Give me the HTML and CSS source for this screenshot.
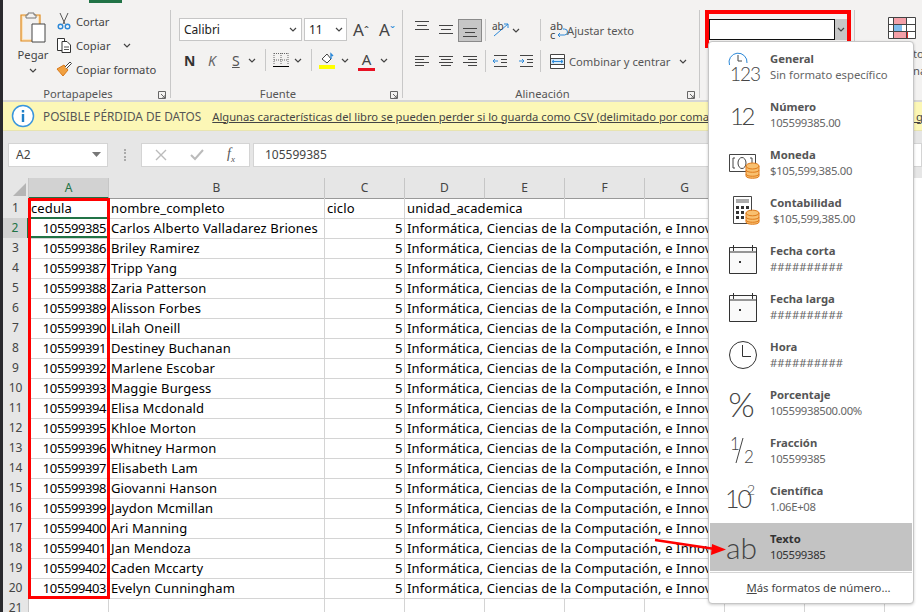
FILE: index.html
```html
<!DOCTYPE html>
<html lang="es">
<head>
    <meta charset="UTF-8">
    <title>Formato de celdas</title>
    <link rel="stylesheet" href="styles.css">
</head>
<body>
<div class="app">
    <div class="ribbon">
        <div class="tab-mark"></div>

        <section class="group clip">
            <div class="group-body clip-body">
                <div class="paste">
                    <svg width="32" height="32" viewBox="-2 -1 32 32"><path d="M2 4h19v26H2z" fill="#fbe3bd" stroke="#e08a1e" stroke-width="1.2"/><path d="M4 6h15v22H4z" fill="#f3f2f1"/><path d="M9 4V2h6v2h2v3H7V4z" fill="#f3f2f1" stroke="#777"/><path d="M13 13h13v18H13z" fill="#fff" stroke="#444"/></svg>
                    <span>Pegar</span>
                    <svg class="chev" width="8" height="5" viewBox="0 0 8 5"><path d="M1 1l3 3 3-3"/></svg>
                </div>
                <div class="clip-actions">
                    <div class="clip-row">
                        <svg width="16" height="18" viewBox="0 0 16 18"><path d="M4 1l5 11M12 1L7 12" stroke="#555" fill="none"/><circle cx="4.500" cy="14.500" r="2.300" fill="none" stroke="#2b88d8" stroke-width="1.400"/><circle cx="11.500" cy="14.500" r="2.300" fill="none" stroke="#2b88d8" stroke-width="1.400"/></svg>
                        <span>Cortar</span>
                    </div>
                    <div class="clip-row">
                        <svg width="16" height="16" viewBox="0 0 16 16"><path d="M1.500 1.500h7v12h-7z" fill="#fff" stroke="#333"/><path d="M6 4.500h5l3.500 3.500v7.500H6z" fill="#fff" stroke="#333"/><path d="M8 10h5M8 12.500h5" stroke="#555"/></svg>
                        <span>Copiar</span>
                        <svg class="chev copy-chev" width="8" height="5" viewBox="0 0 8 5"><path d="M1 1l3 3 3-3"/></svg>
                    </div>
                    <div class="clip-row">
                        <svg width="16" height="16" viewBox="0 0 16 16"><path d="M1 8l7-4 4 5-5 6C5 13 3 10 1 8z" fill="#f0a040" stroke="#d9791a"/><path d="M9 6l5-5 1.500 1.500-5 5" fill="#fff" stroke="#444"/></svg>
                        <span>Copiar formato</span>
                    </div>
                </div>
            </div>
            <div class="group-label">Portapapeles<svg class="launcher" width="8" height="8" viewBox="0 0 8 8"><path d="M.5 7.500v-7h7v7zM3 3l4 4M7 4v3H4" fill="none" stroke="#666"/></svg></div>
        </section>

        <section class="group font">
            <div class="group-body">
                <div class="tool-row">
                    <div class="combo font-name"><span>Calibri</span><svg class="chev" width="8" height="5" viewBox="0 0 8 5"><path d="M1 1l3 3 3-3"/></svg></div>
                    <div class="combo font-size"><span>11</span><svg class="chev" width="8" height="5" viewBox="0 0 8 5"><path d="M1 1l3 3 3-3"/></svg></div>
                    <span class="grow-a">A<small>ˆ</small></span>
                    <span class="grow-a">A<small class="blue">ˇ</small></span>
                </div>
                <div class="tool-row font-tools">
                    <b class="tool-n">N</b>
                    <i class="tool-k">K</i>
                    <u class="tool-s">S</u>
                    <svg class="chev" width="8" height="5" viewBox="0 0 8 5"><path d="M1 1l3 3 3-3"/></svg>
                    <span class="vsep"></span>
                    <svg width="16" height="16" viewBox="0 0 16 16"><path d="M1 1.500h14M1 8h14M8 1v12M1 1v12M15 1v12" stroke="#666" stroke-dasharray="1 1" fill="none"/><path d="M0 14.500h16" stroke="#000"/></svg>
                    <svg class="chev" width="8" height="5" viewBox="0 0 8 5"><path d="M1 1l3 3 3-3"/></svg>
                    <span class="vsep"></span>
                    <svg width="17" height="18" viewBox="0 0 17 18"><path d="M3 8l5-5 4 5-4 4z" fill="#fff" stroke="#444"/><path d="M12 8V3l2 2" stroke="#2b88d8" fill="none" stroke-width="1.400"/><path d="M0 14h16v4H0z" fill="#ffff00"/></svg>
                    <svg class="chev" width="8" height="5" viewBox="0 0 8 5"><path d="M1 1l3 3 3-3"/></svg>
                    <span class="color-a">A</span>
                    <svg class="chev" width="8" height="5" viewBox="0 0 8 5"><path d="M1 1l3 3 3-3"/></svg>
                </div>
            </div>
            <div class="group-label">Fuente<svg class="launcher" width="8" height="8" viewBox="0 0 8 8"><path d="M.5 7.500v-7h7v7zM3 3l4 4M7 4v3H4" fill="none" stroke="#666"/></svg></div>
        </section>

        <section class="group align">
            <div class="group-body">
                <div class="tool-row align-tools">
                    <span class="align-btn"><svg width="16" height="18" viewBox="0 0 16 18"><path d="M1 .5h14M3 4.500h10M1 8.500h14" stroke="#444" fill="none"/></svg></span>
                    <span class="align-btn"><svg width="16" height="18" viewBox="0 0 16 18"><path d="M1 4.500h14M3 8.500h10M1 12.500h14" stroke="#444" fill="none"/></svg></span>
                    <span class="align-btn on"><svg width="16" height="18" viewBox="0 0 16 18"><path d="M1 7.500h14M3 11.500h10M1 15.500h14" stroke="#444" fill="none"/></svg></span>
                    <span class="vsep"></span>
                    <svg class="orient" width="18" height="18" viewBox="0 0 18 18"><path d="M2 15L16 3M16 3h-4M16 3v4" stroke="#2b88d8" fill="none"/><text x="0" y="9" class="orient-text">ab</text></svg>
                    <svg class="chev" width="8" height="5" viewBox="0 0 8 5"><path d="M1 1l3 3 3-3"/></svg>
                    <span class="vsep wide"></span>
                    <span class="wrap-ico">ab<br>c</span>
                    <svg class="wrap-arrow" width="10" height="10" viewBox="0 0 10 10"><path d="M7 1h1.500a2 2 0 0 1 0 6H2M4 5L2 7l2 2" stroke="#2b88d8" fill="none"/></svg>
                    <span class="tool-text">Ajustar texto</span>
                </div>
                <div class="tool-row align-tools lower">
                    <span class="align-btn"><svg width="16" height="12" viewBox="0 0 16 12"><path d="M1 1.500h14M1 4.500h9M1 7.500h14M1 10.500h9" stroke="#444" fill="none"/></svg></span>
                    <span class="align-btn"><svg width="16" height="12" viewBox="0 0 16 12"><path d="M1 1.500h14M3 4.500h10M1 7.500h14M3 10.500h10" stroke="#444" fill="none"/></svg></span>
                    <span class="align-btn"><svg width="16" height="12" viewBox="0 0 16 12"><path d="M1 1.500h14M6 4.500h9M1 7.500h14M6 10.500h9" stroke="#444" fill="none"/></svg></span>
                    <span class="vsep"></span>
                    <svg class="indent" width="16" height="12" viewBox="0 0 16 12"><path d="M1 6h5M3 4L1 6l2 2" stroke="#2b88d8" fill="none"/><path d="M2 .5h13M9 4.500h6M9 7.500h6M2 11.500h13" stroke="#444" fill="none"/></svg>
                    <svg class="indent" width="16" height="12" viewBox="0 0 16 12"><path d="M1 6h5M4 4l2 2-2 2" stroke="#2b88d8" fill="none"/><path d="M2 .5h13M9 4.500h6M9 7.500h6M2 11.500h13" stroke="#444" fill="none"/></svg>
                    <span class="vsep wide"></span>
                    <svg width="15" height="15" viewBox="0 0 15 15"><path d="M.5.5h14v14H.5zM.5 4.500h14M.5 10.500h14" fill="#fff" stroke="#444"/><path d="M1 5h13v5H1z" fill="#d6eaf8"/><path d="M2 7.500h11M4 6L2 7.500 4 9M11 6l2 1.500L11 9" stroke="#2b88d8" fill="none"/></svg>
                    <span class="tool-text">Combinar y centrar</span>
                    <svg class="chev" width="8" height="5" viewBox="0 0 8 5"><path d="M1 1l3 3 3-3"/></svg>
                </div>
            </div>
            <div class="group-label">Alineación<svg class="launcher" width="8" height="8" viewBox="0 0 8 8"><path d="M.5 7.500v-7h7v7zM3 3l4 4M7 4v3H4" fill="none" stroke="#666"/></svg></div>
        </section>

        <section class="group number">
            <div class="number-box">
                <div class="number-input"></div>
                <div class="number-btn"><svg class="chev" width="8" height="5" viewBox="0 0 8 5"><path d="M1 1l3 3 3-3"/></svg></div>
            </div>
        </section>

        <section class="group styles-group">
            <svg width="28" height="22" viewBox="0 0 28 22"><path d="M0 0h28v22H0z" fill="#fff"/><path d="M5.500.5h13v7h-13zM5.500 14.500h14v7h-14z" fill="#f4a0a8" stroke="#e02020"/><path d="M5 7h9v7H5z" fill="#7fbcec"/><path d="M.5.5h27v21H.5zM.5 7.500h27M.5 14.500h27M5.500.5v21M18.500.5v21" fill="none" stroke="#444"/></svg>
            <span class="cut-text">to</span>
            <span class="cut-text">na</span>
        </section>
    </div>

    <div class="notice">
        <svg width="24" height="24" viewBox="0 0 24 24"><circle cx="12" cy="12" r="10.500" fill="#fff" stroke="#3a96dd" stroke-width="1.500"/><path d="M10.800 10h2.400v8h-2.400zM10.800 6h2.400v2.400h-2.400z" fill="#1f80c8"/></svg>
        <span class="notice-title">POSIBLE PÉRDIDA DE DATOS</span>
        <span class="notice-link">Algunas características del libro se pueden perder si lo guarda como CSV (delimitado por comas). Para conservar estas características, guárdelo en un formato de Excel.</span>
    </div>

    <div class="formula-bar">
        <div class="name-box"><span>A2</span><svg width="9" height="5" viewBox="0 0 9 5"><path d="M0 0h9L4.500 5z" fill="#777"/></svg></div>
        <span class="grip"></span>
        <div class="fx-box">
            <svg width="12" height="12" viewBox="0 0 12 12"><path d="M1 1l10 10M11 1L1 11" stroke="#bbb" stroke-width="1.400"/></svg>
            <svg width="14" height="12" viewBox="0 0 14 12"><path d="M1 6l4 4 8-9" stroke="#bbb" stroke-width="2" fill="none"/></svg>
            <span class="fx">f<sub>x</sub></span>
        </div>
        <div class="formula-input">105599385</div>
    </div>

    <div class="sheet">
        <div class="row head">
            <div class="corner"><svg width="13" height="13" viewBox="0 0 13 13"><path d="M13 0v13H0z" fill="#b5b5b5"/></svg></div>
            <div class="col on">A</div><div class="col">B</div><div class="col">C</div><div class="col">D</div><div class="col">E</div><div class="col">F</div><div class="col">G</div><div class="col">H</div><div class="col">I</div>
        </div>
        <div class="row">
            <div class="num">1</div><div class="cell">cedula</div><div class="cell">nombre_completo</div><div class="cell">ciclo</div><div class="cell span2">unidad_academica</div><div class="cell"></div><div class="cell"></div><div class="cell"></div><div class="cell"></div>
        </div>
        <div class="row"><div class="num on">2</div><div class="cell right">105599385</div><div class="cell">Carlos Alberto Valladarez Briones</div><div class="cell right">5</div><div class="cell long">Informática, Ciencias de la Computación, e Innovación</div></div>
        <div class="row"><div class="num">3</div><div class="cell right">105599386</div><div class="cell">Briley Ramirez</div><div class="cell right">5</div><div class="cell long">Informática, Ciencias de la Computación, e Innovación</div></div>
        <div class="row"><div class="num">4</div><div class="cell right">105599387</div><div class="cell">Tripp Yang</div><div class="cell right">5</div><div class="cell long">Informática, Ciencias de la Computación, e Innovación</div></div>
        <div class="row"><div class="num">5</div><div class="cell right">105599388</div><div class="cell">Zaria Patterson</div><div class="cell right">5</div><div class="cell long">Informática, Ciencias de la Computación, e Innovación</div></div>
        <div class="row"><div class="num">6</div><div class="cell right">105599389</div><div class="cell">Alisson Forbes</div><div class="cell right">5</div><div class="cell long">Informática, Ciencias de la Computación, e Innovación</div></div>
        <div class="row"><div class="num">7</div><div class="cell right">105599390</div><div class="cell">Lilah Oneill</div><div class="cell right">5</div><div class="cell long">Informática, Ciencias de la Computación, e Innovación</div></div>
        <div class="row"><div class="num">8</div><div class="cell right">105599391</div><div class="cell">Destiney Buchanan</div><div class="cell right">5</div><div class="cell long">Informática, Ciencias de la Computación, e Innovación</div></div>
        <div class="row"><div class="num">9</div><div class="cell right">105599392</div><div class="cell">Marlene Escobar</div><div class="cell right">5</div><div class="cell long">Informática, Ciencias de la Computación, e Innovación</div></div>
        <div class="row"><div class="num">10</div><div class="cell right">105599393</div><div class="cell">Maggie Burgess</div><div class="cell right">5</div><div class="cell long">Informática, Ciencias de la Computación, e Innovación</div></div>
        <div class="row"><div class="num">11</div><div class="cell right">105599394</div><div class="cell">Elisa Mcdonald</div><div class="cell right">5</div><div class="cell long">Informática, Ciencias de la Computación, e Innovación</div></div>
        <div class="row"><div class="num">12</div><div class="cell right">105599395</div><div class="cell">Khloe Morton</div><div class="cell right">5</div><div class="cell long">Informática, Ciencias de la Computación, e Innovación</div></div>
        <div class="row"><div class="num">13</div><div class="cell right">105599396</div><div class="cell">Whitney Harmon</div><div class="cell right">5</div><div class="cell long">Informática, Ciencias de la Computación, e Innovación</div></div>
        <div class="row"><div class="num">14</div><div class="cell right">105599397</div><div class="cell">Elisabeth Lam</div><div class="cell right">5</div><div class="cell long">Informática, Ciencias de la Computación, e Innovación</div></div>
        <div class="row"><div class="num">15</div><div class="cell right">105599398</div><div class="cell">Giovanni Hanson</div><div class="cell right">5</div><div class="cell long">Informática, Ciencias de la Computación, e Innovación</div></div>
        <div class="row"><div class="num">16</div><div class="cell right">105599399</div><div class="cell">Jaydon Mcmillan</div><div class="cell right">5</div><div class="cell long">Informática, Ciencias de la Computación, e Innovación</div></div>
        <div class="row"><div class="num">17</div><div class="cell right">105599400</div><div class="cell">Ari Manning</div><div class="cell right">5</div><div class="cell long">Informática, Ciencias de la Computación, e Innovación</div></div>
        <div class="row"><div class="num">18</div><div class="cell right">105599401</div><div class="cell">Jan Mendoza</div><div class="cell right">5</div><div class="cell long">Informática, Ciencias de la Computación, e Innovación</div></div>
        <div class="row"><div class="num">19</div><div class="cell right">105599402</div><div class="cell">Caden Mccarty</div><div class="cell right">5</div><div class="cell long">Informática, Ciencias de la Computación, e Innovación</div></div>
        <div class="row"><div class="num">20</div><div class="cell right">105599403</div><div class="cell">Evelyn Cunningham</div><div class="cell right">5</div><div class="cell long">Informática, Ciencias de la Computación, e Innovación</div></div>
        <div class="row">
            <div class="num">21</div><div class="cell"></div><div class="cell"></div><div class="cell"></div><div class="cell"></div><div class="cell"></div><div class="cell"></div><div class="cell"></div><div class="cell"></div><div class="cell"></div>
        </div>

        <div class="active-cell"></div>
        <div class="col-highlight"></div>
    </div>

    <div class="number-highlight"></div>

    <div class="format-menu">
        <div class="item">
            <div class="ico"><svg width="30" height="34" viewBox="0 0 30 34"><path d="M2.500 15A9 9 0 1 1 20 13" fill="none" stroke="#2b88d8"/><path d="M11 5v6h4" fill="none" stroke="#444"/><text x="3" y="31" class="ico-text t19">123</text></svg></div>
            <div class="txt"><b>General</b><span>Sin formato específico</span></div>
        </div>
        <div class="item">
            <div class="ico big twelve">12</div>
            <div class="txt"><b>Número</b><span class="digits">105599385.00</span></div>
        </div>
        <div class="item">
            <div class="ico"><svg width="32" height="32" viewBox="0 0 32 32"><path d="M3.500 7.500h26v17h-26z" fill="#fff" stroke="#444"/><path d="M9 11H7v10h2M24 11h2v10h-2" fill="none" stroke="#444"/><ellipse cx="16" cy="16" rx="4" ry="5.500" fill="none" stroke="#444"/><path d="M20 19v10c0 3 13 3 13 0V19z" fill="#f8c070" stroke="#e07b1a"/><ellipse cx="26.500" cy="19" rx="6.500" ry="3" fill="#f8c070" stroke="#e07b1a"/><path d="M20 23c0 3 13 3 13 0M20 27c0 3 13 3 13 0" fill="none" stroke="#e07b1a"/></svg></div>
            <div class="txt"><b>Moneda</b><span class="digits">$105,599,385.00</span></div>
        </div>
        <div class="item">
            <div class="ico"><svg width="32" height="30" viewBox="-3 0 32 30"><path d="M4.500.5h18v27h-18z" fill="#fff" stroke="#444"/><path d="M7 3h13v4H7z" fill="#aaa"/><path d="M7 10h3v3H7zM12 10h3v3h-3zM17 10h3v3h-3zM7 15h3v3H7zM12 15h3v3h-3zM7 20h3v3H7zM12 20h3v3h-3z" fill="#333"/><path d="M17 17v9c0 3 13 3 13 0v-9z" fill="#f8c070" stroke="#e07b1a"/><ellipse cx="23.500" cy="17" rx="6.500" ry="2.800" fill="#f8c070" stroke="#e07b1a"/><path d="M17 21c0 3 13 3 13 0M17 24c0 3 13 3 13 0" fill="none" stroke="#e07b1a"/></svg></div>
            <div class="txt"><b>Contabilidad</b><span class="digits indented">$105,599,385.00</span></div>
        </div>
        <div class="item">
            <div class="ico"><svg width="30" height="30" viewBox="0 0 30 30"><path d="M2.500 3.500h27v26h-27zM2.500 8h27M6.500 1v6M25.500 1v6" fill="#fafafa" stroke="#333"/><path d="M12 17h2v2h-2z" fill="#333"/></svg></div>
            <div class="txt"><b>Fecha corta</b><span>##########</span></div>
        </div>
        <div class="item">
            <div class="ico"><svg width="30" height="30" viewBox="0 0 30 30"><path d="M2.500 3.500h27v26h-27zM2.500 8h27M6.500 1v6M25.500 1v6" fill="#fafafa" stroke="#333"/><path d="M12 17h2v2h-2z" fill="#333"/></svg></div>
            <div class="txt"><b>Fecha larga</b><span>##########</span></div>
        </div>
        <div class="item">
            <div class="ico"><svg width="30" height="30" viewBox="0 0 30 30"><circle cx="16" cy="15" r="13.500" fill="#fff" stroke="#333"/><path d="M15.500 5v11.500H24" fill="none" stroke="#333"/></svg></div>
            <div class="txt"><b>Hora</b><span>##########</span></div>
        </div>
        <div class="item">
            <div class="ico big pct">%</div>
            <div class="txt"><b>Porcentaje</b><span class="digits">10559938500.00%</span></div>
        </div>
        <div class="item">
            <div class="ico"><svg width="30" height="32" viewBox="0 0 30 32"><text x="3" y="15" class="ico-text t17">1</text><path d="M16 3L9 28" stroke="#444"/><text x="17" y="28" class="ico-text t17">2</text></svg></div>
            <div class="txt"><b>Fracción</b><span class="digits">105599385</span></div>
        </div>
        <div class="item">
            <div class="ico"><svg width="32" height="32" viewBox="0 0 32 32"><text x="-1" y="25" class="ico-text t25">10</text><text x="21" y="12" class="ico-text t14">2</text></svg></div>
            <div class="txt"><b>Científica</b><span class="digits">1.06E+08</span></div>
        </div>
        <div class="item sel">
            <div class="ico big ab">ab</div>
            <div class="txt"><b>Texto</b><span class="digits">105599385</span></div>
        </div>
        <div class="more"><u>M</u>ás formatos de número...</div>
    </div>

    <svg class="arrow" width="80" height="24" viewBox="0 0 80 24"><path d="M1 2l60 9" stroke="#f00" stroke-width="2.500" fill="none"/><path d="M72 11.500L58 6l-1 11z" fill="#f00"/></svg>
</div>
</body>
</html>
```

FILE: styles.css
```css
* {
    box-sizing: border-box;
}
html, body {
    margin: 0;
    height: 100%;
    overflow: hidden;
}
body {
    font-family: "Noto Sans", sans-serif;
    font-size: 12px;
    color: #444;
    background: #e6e6e6;
}
svg {
    flex: none;
    overflow: visible;
}
.app {
    position: relative;
    width: 922px;
    height: 612px;
    overflow: hidden;
    border-left: 3px solid #2a2a2e;
}

/* ribbon */
.ribbon {
    position: relative;
    display: flex;
    height: 102px;
    font-size: 11.2px;
    background: #f3f2f1;
    border-bottom: 2px solid #d6d6d6;
}
.tab-mark {
    position: absolute;
    left: 86px;
    top: 0;
    width: 33px;
    height: 3px;
    background: #217346;
}
.group {
    position: relative;
    flex: none;
    height: 88px;
    margin-top: 10px;
    border-right: 1px solid #c8c8c8;
}
.group-body {
    height: 72px;
}
.group-label {
    position: absolute;
    left: 0;
    right: 0;
    top: 75px;
    padding-right: 17px;
    text-align: center;
    line-height: 18px;
    color: #555;
}
.launcher {
    position: absolute;
    right: 4px;
    top: 6px;
}
.chev {
    fill: none;
    stroke: #444;
    stroke-width: 1.2;
}
.vsep {
    flex: none;
    width: 1px;
    height: 22px;
    background: #c8c8c8;
}
.vsep.wide {
    margin: 0 9px 0 20px;
}
.tool-row {
    display: flex;
    align-items: center;
}
.tool-text {
    white-space: nowrap;
    color: #555;
}

/* portapapeles */
.clip {
    width: 168px;
}
.clip-body {
    display: flex;
    padding-left: 14px;
}
.paste {
    display: flex;
    flex-direction: column;
    align-items: center;
    width: 32px;
}
.paste span {
    margin-top: 4px;
    line-height: 18px;
}
.paste .chev {
    margin-top: 4px;
}
.clip-actions {
    margin: -1px 0 0 7px;
}
.clip-row {
    display: flex;
    align-items: center;
    gap: 4px;
    height: 24px;
}
.copy-chev {
    margin-left: 8px;
}

/* fuente */
.font {
    width: 232px;
    padding-left: 8px;
}
.combo {
    display: flex;
    align-items: center;
    justify-content: space-between;
    height: 23px;
    padding: 0 4px;
    font-size: 12px;
    background: #fff;
    border: 1px solid #c6c6c6;
    color: #222;
}
.font-tools {
    margin-top: 7px;
    height: 24px;
}
.font .tool-row:first-child {
    margin-top: 8px;
}
.font-name {
    width: 123px;
}
.font-size {
    width: 43px;
    margin-left: 2px;
    padding-right: 3px;
}
.grow-a {
    margin-left: 6px;
    width: 20px;
    font-size: 17px;
    color: #444;
}
.grow-a small {
    font-size: 12px;
}
.grow-a .blue {
    color: #2b88d8;
}
.tool-n {
    margin-left: 5px;
    width: 24px;
    font-size: 14px;
    color: #333;
}
.tool-k {
    width: 24px;
    font-size: 14px;
    color: #666;
}
.tool-s {
    width: 16px;
    font-size: 14px;
    color: #555;
}
.font-tools .vsep {
    margin: 0 7px 0 9px;
}
.font-tools > svg:not(.chev) {
    margin-right: 5px;
}
.color-a {
    margin: 0 5px 0 9px;
    width: 17px;
    height: 21px;
    font-size: 15px;
    line-height: 18px;
    text-align: center;
    color: #444;
    border-bottom: 3px solid #e81123;
}

/* alineacion */
.align {
    width: 297px;
    padding-left: 7px;
}
.align-tools {
    height: 24px;
    margin-top: 8px;
}
.align-tools.lower {
    margin-top: 7px;
}
.align-btn {
    display: flex;
    align-items: center;
    justify-content: center;
    width: 24px;
    height: 23px;
    flex: none;
}
.align-btn.on {
    background: #c6c6c6;
    border: 1px solid #8a8a8a;
}
.align-tools > .vsep:not(.wide) {
    margin: 0 6px 0 3px;
}
.orient {
    margin-right: 2px;
}
.orient-text {
    font-family: "Noto Sans", sans-serif;
    font-size: 10px;
    fill: #444;
}
.indent {
    margin-right: 10px;
}
.align-tools .indent + .vsep {
    margin-left: -4px;
}
.wrap-ico {
    width: 12px;
    font-size: 11px;
    line-height: 9px;
    color: #444;
}
.wrap-arrow {
    margin: 6px 1px 0 -6px;
}
.lower .tool-text {
    margin: 0 9px 0 4px;
}

/* numero */
.number {
    width: 155px;
    padding: 9px 0 0 9px;
}
.number-box {
    display: flex;
    width: 138px;
    height: 21px;
}
.number-input {
    flex: 1;
    background: #fff;
    border: 1px solid #111;
}
.number-btn {
    display: flex;
    align-items: center;
    justify-content: center;
    width: 12px;
    background: #c6c6c6;
}
.number-highlight {
    position: absolute;
    left: 702px;
    top: 10px;
    width: 146px;
    height: 38px;
    border: 4px solid #f00;
}
.styles-group {
    flex: 1;
    padding: 7px 0 0 33px;
    border: 0;
}
.cut-text {
    position: absolute;
    left: 58px;
    top: 36px;
    color: #555;
}
.cut-text + .cut-text {
    top: 53px;
}

/* barra amarilla */
.notice {
    display: flex;
    align-items: center;
    height: 29px;
    padding-left: 8px;
    font-size: 11.2px;
    background: #fcf7b6;
    border-bottom: 1px solid #e8e4b0;
    white-space: nowrap;
    overflow: hidden;
}
.notice-title {
    margin: 0 11px 0 8px;
    font-size: 11.8px;
    color: #555;
}
.notice-link {
    color: #444;
    text-decoration: underline;
}

/* formula */
.formula-bar {
    display: flex;
    align-items: center;
    height: 47px;
    padding: 0 0 0 5px;
}
.name-box {
    display: flex;
    align-items: center;
    justify-content: space-between;
    width: 100px;
    height: 24px;
    padding: 0 6px 0 7px;
    background: #fff;
    border: 1px solid #d4d4d4;
    color: #444;
}
.grip {
    width: 2px;
    height: 12px;
    margin: 0 15px 0 16px;
    border-left: 2px dotted #aaa;
}
.fx-box {
    display: flex;
    align-items: center;
    gap: 23px;
    width: 109px;
    height: 24px;
    padding-left: 13px;
    background: #fff;
    border: 1px solid #d4d4d4;
}
.fx {
    font-family: "Liberation Serif", serif;
    font-style: italic;
    font-size: 14px;
    color: #555;
}
.fx sub {
    font-size: 9px;
}
.formula-input {
    flex: 1;
    height: 24px;
    margin-left: 3px;
    padding-left: 11px;
    line-height: 22px;
    background: #fff;
    border: 1px solid #d4d4d4;
    color: #444;
}

/* hoja */
.sheet {
    position: relative;
    background: #fff;
    font-size: 13px;
    color: #000;
}
.row {
    display: grid;
    grid-template-columns: 26px 80px 216px repeat(7, 80px);
    height: 20px;
}
.corner {
    display: flex;
    align-items: flex-end;
    justify-content: flex-end;
    padding: 0 2px 2px 0;
    background: #e6e6e6;
    border-right: 1px solid #c6c6c6;
    border-bottom: 1px solid #999;
}
.col {
    text-align: center;
    line-height: 19px;
    font-size: 12px;
    color: #444;
    background: #e6e6e6;
    border-right: 1px solid #c6c6c6;
    border-bottom: 1px solid #999;
}
.col.on {
    background: #d2d2d2;
    color: #217346;
    border-bottom: 2px solid #217346;
}
.num {
    text-align: center;
    line-height: 20px;
    font-size: 12px;
    color: #444;
    background: #e6e6e6;
    border-right: 1px solid #c6c6c6;
    border-bottom: 1px solid #c6c6c6;
}
.num.on {
    background: #d2d2d2;
    color: #217346;
    border-right: 2px solid #217346;
}
.cell {
    padding: 0 2px;
    line-height: 21px;
    letter-spacing: .13px;
    white-space: nowrap;
    overflow: hidden;
    border-right: 1px solid #d4d4d4;
    border-bottom: 1px solid #d4d4d4;
}
.cell.right {
    text-align: right;
    letter-spacing: -.42px;
}
.cell.span2 {
    grid-column: span 2;
}
.cell.long {
    grid-column: 5 / -1;
    border-right: 0;
}
.active-cell {
    position: absolute;
    left: 26px;
    top: 39px;
    width: 81px;
    height: 21px;
    border: 2px solid #217346;
}
.col-highlight {
    position: absolute;
    left: 25px;
    top: 20px;
    width: 82px;
    height: 401px;
    border: 3px solid #f00;
}

/* menu de formatos */
.format-menu {
    position: absolute;
    left: 705px;
    top: 41px;
    width: 206px;
    height: 563px;
    padding: 1px 1px 0;
    font-size: 11.3px;
    background: #fff;
    border: 1px solid #c6c6c6;
    border-radius: 4px;
    box-shadow: 0 1px 3px rgba(0, 0, 0, .2);
}
.item {
    display: flex;
    align-items: center;
    height: 48px;
}
.item.sel {
    background: #c3c3c3;
}
.ico {
    display: flex;
    align-items: center;
    justify-content: center;
    flex: none;
    width: 60px;
    padding-left: 3px;
    color: #444;
}
.big {
    font-family: "Lato", sans-serif;
    font-weight: 300;
    font-size: 24px;
}
.twelve {
    letter-spacing: -2.500px;
}
.pct {
    font-size: 34px;
}
.ab {
    font-size: 30px;
}
.ico-text {
    font-family: "Lato", sans-serif;
    font-weight: 300;
    fill: #444;
    letter-spacing: -1px;
}
.t19 { font-size: 19px; }
.t17 { font-size: 17px; }
.t25 { font-size: 25px; letter-spacing: -2px; }
.t14 { font-size: 14px; }
.txt {
    display: flex;
    flex-direction: column;
    color: #666;
    line-height: 16px;
    white-space: nowrap;
}
.txt b {
    color: #555;
}
.txt .digits {
    letter-spacing: -.3px;
}
.txt .indented {
    padding-left: 3px;
}
.item.sel .txt,
.item.sel .txt b {
    color: #333;
}
.more {
    margin-top: 1px;
    height: 31px;
    padding-left: 15px;
    line-height: 30px;
    text-align: center;
    color: #444;
    border-top: 1px solid #d4d4d4;
}
.arrow {
    position: absolute;
    left: 651px;
    top: 538px;
}
```
